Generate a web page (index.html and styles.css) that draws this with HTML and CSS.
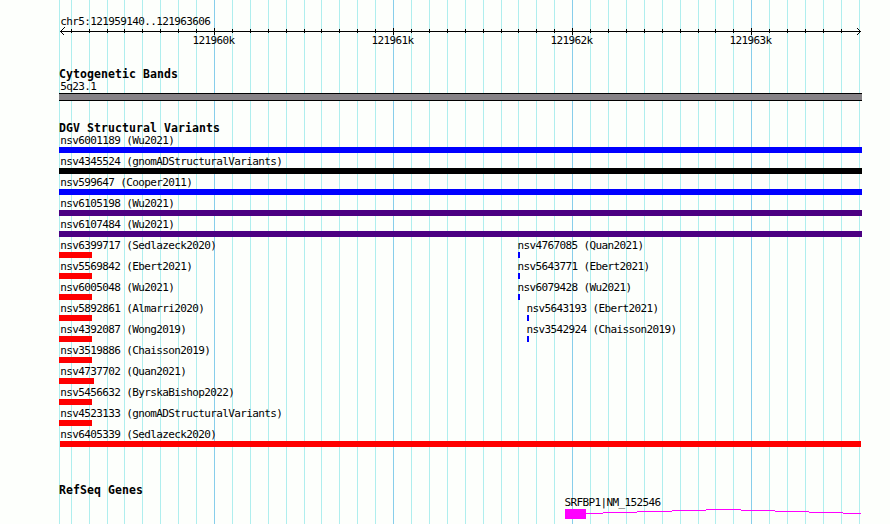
FILE: index.html
```html
<!DOCTYPE html>
<html lang="en">
<head>
    <meta charset="UTF-8">
    <title>chr5:121959140..121963606</title>
    <link rel="stylesheet" href="styles.css">
</head>
<body>
    <svg class="gridlines" width="890" height="524">
        <path class="minor" d="M59.5 0V524M71.5 0V524M89.5 0V524M107.5 0V524M124.5 0V524M142.5 0V524M160.5 0V524M178.5 0V524M196.5 0V524M232.5 0V524M250.5 0V524M268.5 0V524M286.5 0V524M304.5 0V524M321.5 0V524M339.5 0V524M357.5 0V524M375.5 0V524M411.5 0V524M429.5 0V524M447.5 0V524M465.5 0V524M483.5 0V524M501.5 0V524M518.5 0V524M536.5 0V524M554.5 0V524M590.5 0V524M608.5 0V524M626.5 0V524M644.5 0V524M662.5 0V524M680.5 0V524M698.5 0V524M715.5 0V524M733.5 0V524M769.5 0V524M787.5 0V524M805.5 0V524M823.5 0V524M841.5 0V524M859.5 0V524"/>
        <path class="major" d="M214.5 0V524M393.5 0V524M572.5 0V524M751.5 0V524"/>
    </svg>

    <main class="browser">
        <header class="ruler">
            <div class="label">chr5:121959140..121963606</div>
            <svg class="axis" width="803" height="24" viewBox="59 27 803 24">
                <path d="M60 31.5H861M64.5 27.5L60.5 31.5L64.5 35.5M857 28L860.5 31.5L857 35"/>
                <path d="M71.5 29V33M89.5 29V33M107.5 29V33M124.5 29V33M142.5 29V33M160.5 29V33M178.5 29V33M196.5 29V33M232.5 29V33M250.5 29V33M268.5 29V33M286.5 29V33M304.5 29V33M321.5 29V33M339.5 29V33M357.5 29V33M375.5 29V33M411.5 29V33M429.5 29V33M447.5 29V33M465.5 29V33M483.5 29V33M501.5 29V33M518.5 29V33M536.5 29V33M554.5 29V33M590.5 29V33M608.5 29V33M626.5 29V33M644.5 29V33M662.5 29V33M680.5 29V33M698.5 29V33M715.5 29V33M733.5 29V33M769.5 29V33M787.5 29V33M805.5 29V33M823.5 29V33M841.5 29V33"/>
                <path d="M214.5 28V35M393.5 28V35M572.5 28V35M751.5 28V35"/>
                <text x="192.4" y="44">121960k</text>
                <text x="371.4" y="44">121961k</text>
                <text x="550.4" y="44">121962k</text>
                <text x="729.4" y="44">121963k</text>
            </svg>
        </header>

        <section class="track cytobands">
            <h2>Cytogenetic Bands</h2>
            <div class="label">5q23.1</div>
            <div class="band"></div>
        </section>

        <section class="track variants">
            <h2>DGV Structural Variants</h2>
            <div class="row"><div class="feature"><div class="label">nsv6001189 (Wu2021)</div><div class="bar full blue"></div></div></div>
            <div class="row"><div class="feature"><div class="label">nsv4345524 (gnomADStructuralVariants)</div><div class="bar full black"></div></div></div>
            <div class="row"><div class="feature"><div class="label">nsv599647 (Cooper2011)</div><div class="bar full blue"></div></div></div>
            <div class="row"><div class="feature"><div class="label">nsv6105198 (Wu2021)</div><div class="bar full indigo"></div></div></div>
            <div class="row"><div class="feature"><div class="label">nsv6107484 (Wu2021)</div><div class="bar full indigo"></div></div></div>
            <div class="row">
                <div class="feature"><div class="label">nsv6399717 (Sedlazeck2020)</div><div class="bar loss"></div></div>
                <div class="feature gain"><div class="label">nsv4767085 (Quan2021)</div><div class="bar tiny blue"></div></div>
            </div>
            <div class="row">
                <div class="feature"><div class="label">nsv5569842 (Ebert2021)</div><div class="bar loss"></div></div>
                <div class="feature gain"><div class="label">nsv5643771 (Ebert2021)</div><div class="bar tiny blue"></div></div>
            </div>
            <div class="row">
                <div class="feature"><div class="label">nsv6005048 (Wu2021)</div><div class="bar loss"></div></div>
                <div class="feature gain"><div class="label">nsv6079428 (Wu2021)</div><div class="bar tiny blue"></div></div>
            </div>
            <div class="row">
                <div class="feature"><div class="label">nsv5892861 (Almarri2020)</div><div class="bar loss"></div></div>
                <div class="feature gain later"><div class="label">nsv5643193 (Ebert2021)</div><div class="bar tiny blue"></div></div>
            </div>
            <div class="row">
                <div class="feature"><div class="label">nsv4392087 (Wong2019)</div><div class="bar loss"></div></div>
                <div class="feature gain later"><div class="label">nsv3542924 (Chaisson2019)</div><div class="bar tiny blue"></div></div>
            </div>
            <div class="row"><div class="feature"><div class="label">nsv3519886 (Chaisson2019)</div><div class="bar loss"></div></div></div>
            <div class="row"><div class="feature"><div class="label">nsv4737702 (Quan2021)</div><div class="bar loss wide"></div></div></div>
            <div class="row"><div class="feature"><div class="label">nsv5456632 (ByrskaBishop2022)</div><div class="bar loss"></div></div></div>
            <div class="row"><div class="feature"><div class="label">nsv4523133 (gnomADStructuralVariants)</div><div class="bar loss"></div></div></div>
            <div class="row"><div class="feature"><div class="label">nsv6405339 (Sedlazeck2020)</div><div class="bar loss inset"></div></div></div>
        </section>

        <section class="track genes">
            <h2>RefSeq Genes</h2>
            <div class="gene">
                <div class="label">SRFBP1|NM_152546</div>
                <svg class="transcript" width="296" height="10" viewBox="565 509 296 10">
                    <rect x="565" y="509" width="21" height="10"/>
                    <path d="M586 513.5H603M603 512.5H637M637 511.5H672M672 510.5H706M706 509.5H741M741 510.5H775M775 511.5H809M809 512.5H843M843 513.5H861"/>
                </svg>
            </div>
        </section>
    </main>
</body>
</html>
```
FILE: styles.css
```css
body {
    margin: 0;
    width: 890px;
    height: 524px;
    overflow: hidden;
    background: #fdfffc;
    color: #000;
    font-family: "DejaVu Sans Mono", monospace;
    font-size: 11px;
}
svg {
    display: block;
    shape-rendering: crispEdges;
}
.gridlines {
    position: absolute;
    top: 0;
    left: 0;
}
.gridlines .minor {
    stroke: #afeeee;
}
.gridlines .major {
    stroke: #87ceeb;
}
.browser {
    position: relative;
    width: 803px;
    padding: 16px 0 0 59px;
}
.label {
    height: 12px;
    padding-left: 1.2px;
    line-height: 12px;
    letter-spacing: -0.622px;
    white-space: nowrap;
}
h2 {
    height: 12px;
    margin: 0;
    font-size: 11.5px;
    line-height: 10px;
    letter-spacing: 0.077px;
}

/* ruler */
.ruler {
    height: 53px;
}
.axis {
    margin-top: -1px;
}
.axis path {
    fill: none;
    stroke: #000;
}
.axis text {
    letter-spacing: -0.622px;
}

/* tracks */
.band {
    box-sizing: border-box;
    height: 8px;
    background: #868286;
    border: solid #000;
    border-width: 1px 0;
}
.variants {
    margin-top: 22px;
}
.row {
    display: grid;
    grid-template-columns: 458px 1fr;
    height: 21px;
}
.bar {
    height: 6px;
}
.full {
    width: 803px;
}
.blue {
    background: #00f;
}
.black {
    background: #000;
}
.indigo {
    background: #4b0082;
}
.loss {
    width: 33px;
    background: #f00;
}
.loss.wide {
    width: 35px;
}
.loss.inset {
    width: 801px;
    margin-left: 1px;
}
.gain .label {
    padding-left: 0.4px;
}
.gain .tiny {
    width: 2px;
    margin-left: 1px;
}
.gain.later {
    padding-left: 9px;
}
.genes {
    margin-top: 35px;
}
.gene {
    padding-left: 506px;
}
.gene .label {
    padding: 0;
    margin-left: -0.6px;
}
.transcript {
    fill: #f0f;
}
.transcript path {
    stroke: #f0f;
}
```
